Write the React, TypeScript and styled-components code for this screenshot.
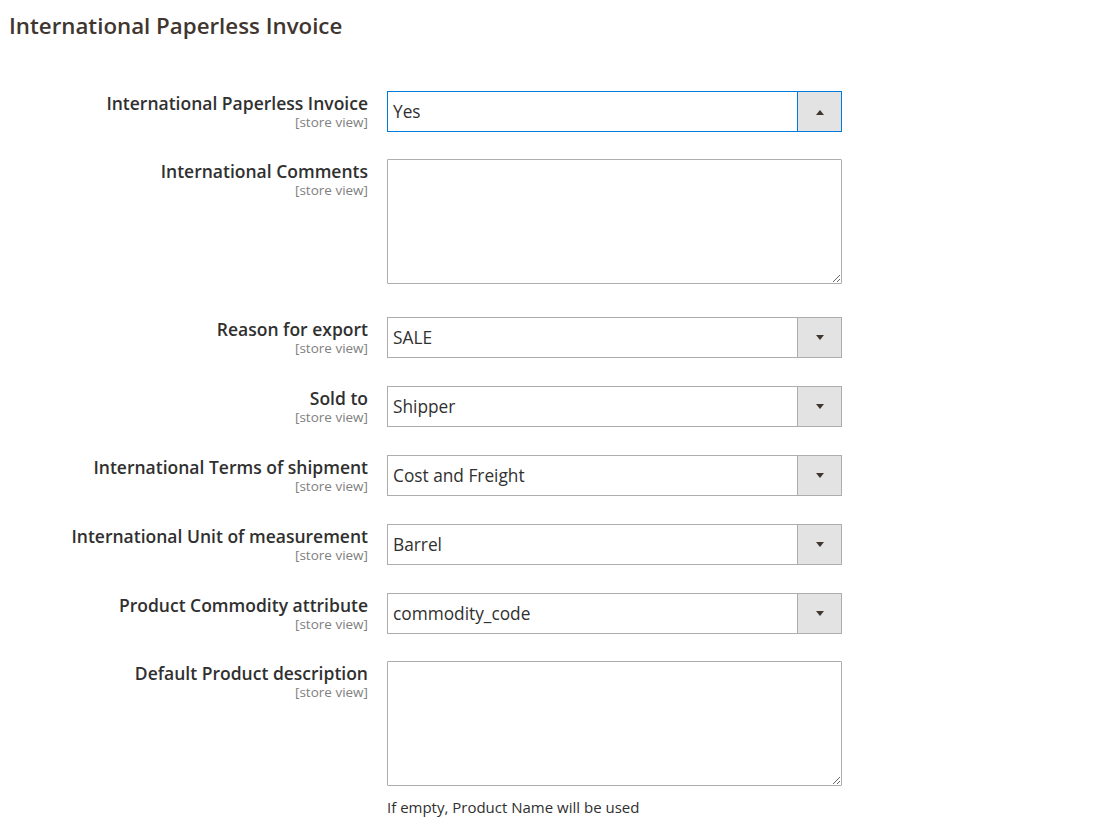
import styled, { createGlobalStyle } from 'styled-components';

const GlobalStyle = createGlobalStyle`
  body {
    margin: 0;
    background: #ffffff;
    font-family: 'Open Sans', 'Liberation Sans', sans-serif;
    color: #303030;
  }
`;

type Field =
  | { kind: 'select'; label: string; value: string; open?: boolean }
  | { kind: 'textarea'; label: string; note?: string };

const FIELDS: Field[] = [
  { kind: 'select', label: 'International Paperless Invoice', value: 'Yes', open: true },
  { kind: 'textarea', label: 'International Comments' },
  { kind: 'select', label: 'Reason for export', value: 'SALE' },
  { kind: 'select', label: 'Sold to', value: 'Shipper' },
  { kind: 'select', label: 'International Terms of shipment', value: 'Cost and Freight' },
  { kind: 'select', label: 'International Unit of measurement', value: 'Barrel' },
  { kind: 'select', label: 'Product Commodity attribute', value: 'commodity_code' },
  {
    kind: 'textarea',
    label: 'Default Product description',
    note: 'If empty, Product Name will be used',
  },
];

function Arrow({ up }: { up?: boolean }) {
  return (
    <svg width="10" height="6" viewBox="0 0 10 6">
      {up ? <path d="M1 6 L5 1 L9 6 Z" fill="#41362f" /> : <path d="M1 0 L9 0 L5 5 Z" fill="#41362f" />}
    </svg>
  );
}

function App() {
  return (
    <Page>
      <GlobalStyle />
      <Title>International Paperless Invoice</Title>
      <Form>
        {FIELDS.map((f) => (
          <Row key={f.label} $tall={f.kind === 'textarea'}>
            <Label>
              <LabelText>{f.label}</LabelText>
              <Scope>[store view]</Scope>
            </Label>
            <Control>
              {f.kind === 'select' ? (
                <Select $open={f.open}>
                  <SelectValue>{f.value}</SelectValue>
                  <SelectButton $open={f.open}>
                    <Arrow up={f.open} />
                  </SelectButton>
                </Select>
              ) : (
                <>
                  <TextArea />
                  {f.note && <Note>{f.note}</Note>}
                </>
              )}
            </Control>
          </Row>
        ))}
      </Form>
    </Page>
  );
}

const Page = styled.div`
  padding: 12px 0 0 9px;
`;

const Title = styled.h2`
  margin: 0;
  font-size: 22.3px;
  line-height: 28px;
  font-weight: 600;
  color: #41362f;
`;

const Form = styled.div`
  display: flex;
  flex-direction: column;
  margin-top: 51px;
`;

const Row = styled.div<{ $tall?: boolean }>`
  display: grid;
  grid-template-columns: 359px 455px;
  column-gap: 19px;
  margin-bottom: ${(p) => (p.$tall ? 33 : 28)}px;

  &:first-child {
    margin-bottom: 27px;
  }

  &:nth-child(7) {
    margin-bottom: 27px;
  }
`;

const Label = styled.div`
  display: flex;
  flex-direction: column;
  align-items: flex-end;
  text-align: right;
  padding-top: 1px;
`;

const LabelText = styled.span`
  font-size: 17.5px;
  line-height: 22px;
  font-weight: 600;
  color: #303030;
`;

const Scope = styled.span`
  font-size: 13.5px;
  line-height: 17px;
  color: #808080;
`;

const Control = styled.div`
  display: flex;
  flex-direction: column;
`;

const Select = styled.div<{ $open?: boolean }>`
  display: flex;
  height: 41px;
  box-sizing: border-box;
  border: 1px solid ${(p) => (p.$open ? '#007bdb' : '#adadad')};
  background: #ffffff;
`;

const SelectValue = styled.div`
  flex: 1;
  display: flex;
  align-items: center;
  padding-left: 5px;
  font-size: 17.3px;
  color: #303030;
`;

const SelectButton = styled.div<{ $open?: boolean }>`
  width: 43px;
  display: flex;
  align-items: center;
  justify-content: center;
  background: #e3e3e3;
  border-left: 1px solid ${(p) => (p.$open ? '#007bdb' : '#adadad')};
`;

const TextArea = styled.textarea`
  display: block;
  width: 455px;
  height: 125px;
  box-sizing: border-box;
  border: 1px solid #adadad;
  border-radius: 1px;
  margin: 0;
  font-family: inherit;
  resize: vertical;
`;

const Note = styled.div`
  margin-top: 11px;
  font-size: 15px;
  line-height: 20px;
  color: #303030;
`;

export default App;
